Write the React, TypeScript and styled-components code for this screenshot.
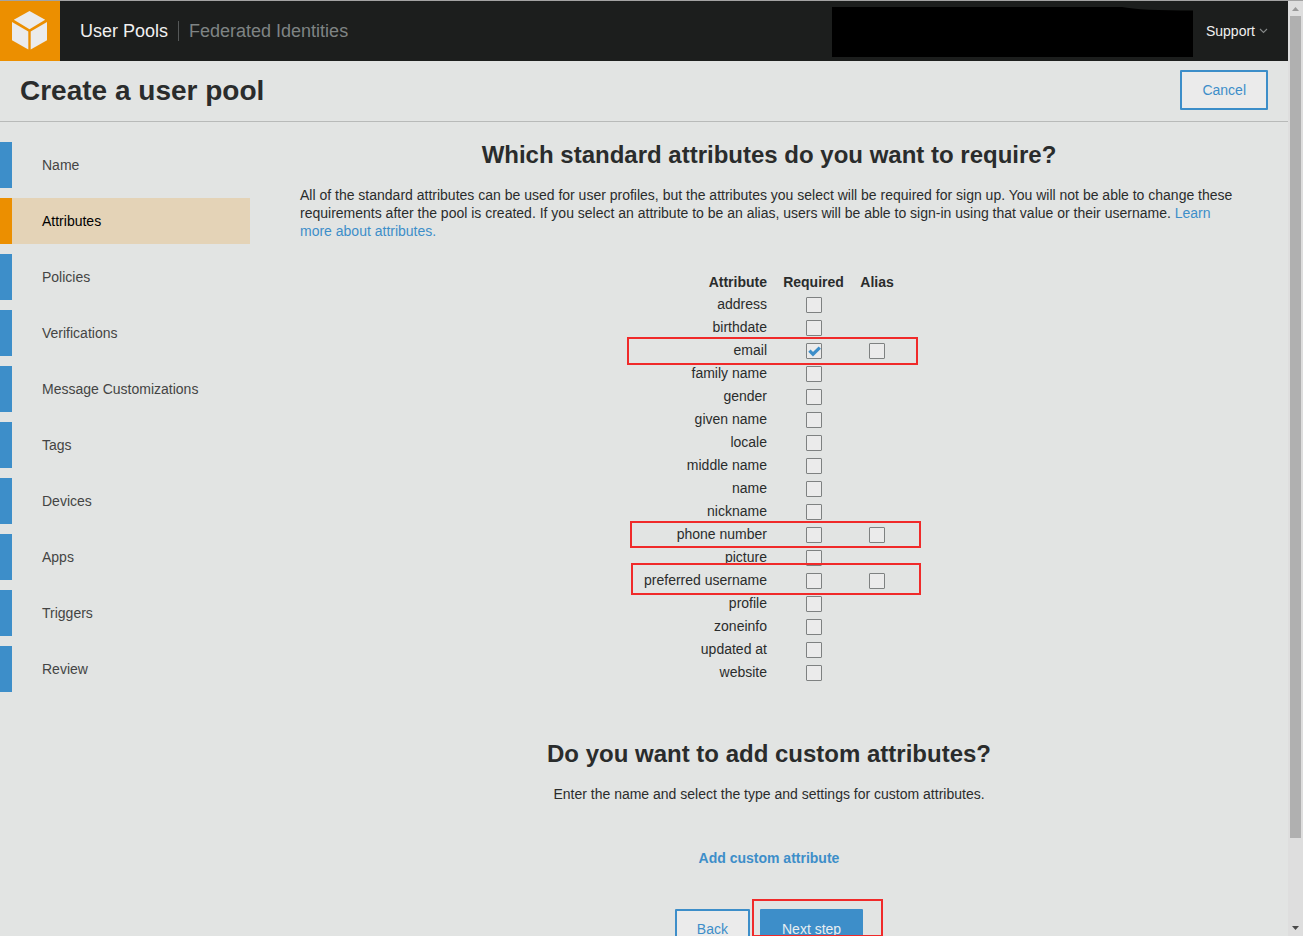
import React from "react";
import styled, { createGlobalStyle } from "styled-components";

const blue = "#3d8ec9";
const orange = "#ec8f00";
const red = "#f02a2a";

const GlobalStyle = createGlobalStyle`
  * { box-sizing: border-box; }
  body {
    margin: 0;
    overflow: hidden;
    background: #e2e4e3;
    color: #2a2c2c;
    font-family: "Liberation Sans", Arial, sans-serif;
    font-size: 14px;
    line-height: 18px;
  }
`;

const Window = styled.div`
  display: flex;
  height: 936px;
  width: 1303px;
  overflow: hidden;
  border-top: 1px solid #a3a3a3;
`;

const Page = styled.div`
  width: 1288px;
  height: 935px;
  overflow: hidden;
`;

const TopBar = styled.header`
  display: flex;
  align-items: center;
  height: 60px;
  background: #1c1e1d;
`;

const Logo = styled.div`
  width: 60px;
  height: 60px;
  background: ${orange};
  svg { display: block; }
`;

const ServiceNav = styled.nav`
  display: flex;
  align-items: center;
  margin-left: 20px;
  font-size: 18px;
  line-height: 20px;
`;

const ServiceLink = styled.a<{ $muted?: boolean }>`
  color: ${(p) => (p.$muted ? "#7f8484" : "#f0f0f0")};
  white-space: nowrap;
  & + & {
    margin-left: 10px;
    padding-left: 10px;
    border-left: 1px solid #555858;
  }
`;

const AccountBlock = styled.svg`
  display: block;
  width: 361px;
  height: 50px;
  margin: 2px 13px 0 auto;
`;

const Support = styled.a`
  display: flex;
  align-items: center;
  gap: 4px;
  margin-right: 20px;
  color: #f0f0f0;
`;

const TitleBar = styled.div`
  display: flex;
  align-items: center;
  justify-content: space-between;
  height: 61px;
  padding: 0 20px 3px;
  border-bottom: 1px solid #b8bab9;
`;

const PageTitle = styled.h1`
  margin: 0;
  padding-top: 2px;
  font-size: 28px;
  line-height: 32px;
`;

const Button = styled.button<{ $primary?: boolean }>`
  height: 40px;
  padding: 0 20px;
  border: 2px solid ${blue};
  border-radius: 1px;
  background: ${(p) => (p.$primary ? blue : "#ebebeb")};
  color: ${(p) => (p.$primary ? "#e8eef2" : blue)};
  font: 14px/18px "Liberation Sans", Arial, sans-serif;
`;

const Body = styled.div`
  display: flex;
`;

const Steps = styled.nav`
  display: flex;
  flex-direction: column;
  flex: none;
  gap: 10px;
  width: 250px;
  padding-top: 20px;
`;

const Step = styled.a<{ $active?: boolean }>`
  display: flex;
  align-items: center;
  height: 46px;
  padding-left: 30px;
  border-left: 12px solid ${(p) => (p.$active ? orange : blue)};
  background: ${(p) => (p.$active ? "#e4d3b7" : "transparent")};
  color: ${(p) => (p.$active ? "#000" : "#444")};
`;

const Main = styled.main`
  display: flex;
  flex-direction: column;
  align-items: center;
  flex: 1;
  padding: 18px 50px 0;
`;

const Heading = styled.h2`
  margin: 0;
  font-size: 24px;
  line-height: 30px;
`;

const Intro = styled.p`
  margin: 16px 0 0;
  width: 938px;
`;

const Link = styled.a`
  color: ${blue};
`;

const AttributeTable = styled.div`
  display: flex;
  flex-direction: column;
  margin-top: 33px;
  width: 266px;
`;

const Row = styled.div<{ $head?: boolean }>`
  position: relative;
  display: grid;
  grid-template-columns: 131px 93px 34px;
  height: ${(p) => (p.$head ? 22 : 23)}px;
  font-weight: ${(p) => (p.$head ? "bold" : "normal")};
`;

const Label = styled.span`
  text-align: right;
  white-space: nowrap;
`;

const Cell = styled.span`
  display: flex;
  justify-content: center;
`;

const Check = styled.span`
  width: 16px;
  height: 16px;
  margin-top: 2px;
  border: 1px solid #7e8181;
  border-radius: 1px;
  background: #ebebeb;
  svg { display: block; }
`;

const Highlight = styled.span<{ $x: number; $y: number; $w: number; $h: number }>`
  position: absolute;
  z-index: 1;
  left: ${(p) => p.$x}px;
  top: ${(p) => p.$y}px;
  width: ${(p) => p.$w}px;
  height: ${(p) => p.$h}px;
  border: 2px solid ${red};
  pointer-events: none;
`;

const CustomSection = styled.section`
  display: flex;
  flex-direction: column;
  align-items: center;
  margin-top: 53px;
`;

const Hint = styled.p`
  margin: 16px 0 46px;
`;

const AddLink = styled(Link)`
  font-weight: bold;
`;

const Actions = styled.div`
  display: flex;
  gap: 10px;
  margin-top: 42px;
`;

const Marked = styled.div`
  position: relative;
`;

const Scrollbar = styled.div`
  display: flex;
  flex-direction: column;
  justify-content: space-between;
  width: 15px;
  height: 935px;
  padding: 6px 2px 6px;
  background: #dedede;
  svg { display: block; margin: 0 auto; }
`;

const Thumb = styled.div`
  width: 11px;
  height: 822px;
  margin: 5px 0 auto;
  background: #b0b0b0;
`;

const steps = [
  "Name", "Attributes", "Policies", "Verifications", "Message Customizations",
  "Tags", "Devices", "Apps", "Triggers", "Review",
];

type Attribute = {
  name: string;
  required?: boolean;
  alias?: boolean;
  mark?: [number, number, number, number];
};

const attributes: Attribute[] = [
  { name: "address" },
  { name: "birthdate" },
  { name: "email", required: true, alias: true, mark: [-9, -4, 291, 28] },
  { name: "family name" },
  { name: "gender" },
  { name: "given name" },
  { name: "locale" },
  { name: "middle name" },
  { name: "name" },
  { name: "nickname" },
  { name: "phone number", alias: true, mark: [-6, -4, 291, 27] },
  { name: "picture" },
  { name: "preferred username", alias: true, mark: [-5, -8, 290, 32] },
  { name: "profile" },
  { name: "zoneinfo" },
  { name: "updated at" },
  { name: "website" },
];

function Checkbox({ checked }: { checked?: boolean }) {
  return (
    <Check role="checkbox" aria-checked={!!checked}>
      {checked && (
        <svg width="14" height="14" viewBox="0 0 14 14">
          <path d="M2.4 6.6 6 10.2 12.8 3.7" fill="none" stroke={blue} strokeWidth="3.2" />
        </svg>
      )}
    </Check>
  );
}

export default function App() {
  return (
    <Window>
      <GlobalStyle />
      <Page>
        <TopBar>
          <Logo>
            <svg width="60" height="60" viewBox="0 0 60 60" fill="#ebebeb">
              <path d="M29.5 10 45.2 18.8 29.5 28.2 13.8 18.8Z" />
              <path d="M12 21 28.3 30.6V48.5L12 39.2Z" />
              <path d="M47 21 30.7 30.6V48.5L47 39.2Z" />
            </svg>
          </Logo>
          <ServiceNav>
            <ServiceLink>User Pools</ServiceLink>
            <ServiceLink $muted>Federated Identities</ServiceLink>
          </ServiceNav>
          <AccountBlock viewBox="0 0 361 50">
            <path d="M0 0H290Q308 3.5 361 3.5V50H0Z" fill="#000" />
          </AccountBlock>
          <Support>
            Support
            <svg width="9" height="6" viewBox="0 0 9 6">
              <path d="M1 1 4.5 4.5 8 1" fill="none" stroke="#858888" strokeWidth="1.1" />
            </svg>
          </Support>
        </TopBar>
        <TitleBar>
          <PageTitle>Create a user pool</PageTitle>
          <Button>Cancel</Button>
        </TitleBar>
        <Body>
          <Steps>
            {steps.map((s) => (
              <Step key={s} $active={s === "Attributes"}>{s}</Step>
            ))}
          </Steps>
          <Main>
            <Heading>Which standard attributes do you want to require?</Heading>
            <Intro>
              All of the standard attributes can be used for user profiles, but the attributes you
              select will be required for sign up. You will not be able to change these requirements
              after the pool is created. If you select an attribute to be an alias, users will be able
              to sign-in using that value or their username. <Link>Learn more about attributes.</Link>
            </Intro>
            <AttributeTable>
              <Row $head>
                <Label>Attribute</Label>
                <Cell>Required</Cell>
                <Cell>Alias</Cell>
              </Row>
              {attributes.map((a) => (
                <Row key={a.name}>
                  <Label>{a.name}</Label>
                  <Cell><Checkbox checked={a.required} /></Cell>
                  <Cell>{a.alias && <Checkbox />}</Cell>
                  {a.mark && (
                    <Highlight $x={a.mark[0]} $y={a.mark[1]} $w={a.mark[2]} $h={a.mark[3]} />
                  )}
                </Row>
              ))}
            </AttributeTable>
            <CustomSection>
              <Heading>Do you want to add custom attributes?</Heading>
              <Hint>Enter the name and select the type and settings for custom attributes.</Hint>
              <AddLink>Add custom attribute</AddLink>
              <Actions>
                <Button>Back</Button>
                <Marked>
                  <Button $primary>Next step</Button>
                  <Highlight $x={-8} $y={-10} $w={131} $h={38} />
                </Marked>
              </Actions>
            </CustomSection>
          </Main>
        </Body>
      </Page>
      <Scrollbar>
        <svg width="7" height="4" viewBox="0 0 7 4"><path d="M0 4 3.5 0 7 4Z" fill="#999" /></svg>
        <Thumb />
        <svg width="7" height="4" viewBox="0 0 7 4"><path d="M0 0 3.5 4 7 0Z" fill="#4a4a4a" /></svg>
      </Scrollbar>
    </Window>
  );
}
